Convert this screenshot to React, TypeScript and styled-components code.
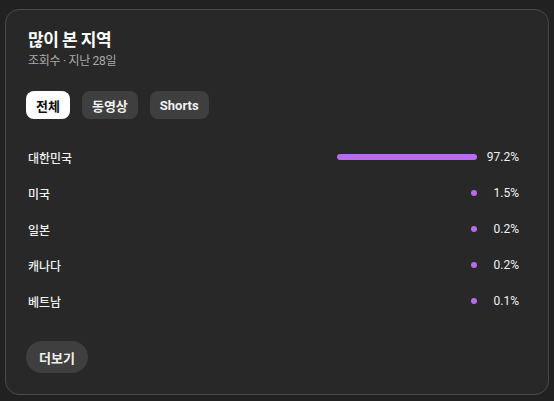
import styled, { createGlobalStyle } from 'styled-components';

const GlobalStyle = createGlobalStyle`
  html, body {
    margin: 0;
    background-color: #212121;
  }
  body {
    font-family: Roboto, "Noto Sans CJK KR", sans-serif;
    color: #f1f1f1;
  }
`;

const Page = styled.div`
  padding: 9px 5px 0 5px;
`;

const Card = styled.section`
  box-sizing: border-box;
  width: 544px;
  height: 386px;
  padding: 18px 20px 21px 20px;
  background-color: #282828;
  border: 1px solid #4a4a4a;
  border-radius: 14px;
  display: flex;
  flex-direction: column;
  align-items: flex-start;
`;

const Title = styled.h2`
  margin: 0 0 0 2px;
  font-size: 17px;
  line-height: 24px;
  font-weight: 700;
  color: #fff;
  letter-spacing: -0.5px;
`;

const Subtitle = styled.div`
  margin-left: 2px;
  font-size: 12px;
  line-height: 18px;
  color: #aaaaaa;
  letter-spacing: -0.3px;
`;

const ChipRow = styled.div`
  display: flex;
  gap: 12px;
  margin-top: 21px;
`;

const Chip = styled.button<{ $active?: boolean }>`
  height: 28px;
  padding: 0 10px;
  border: none;
  border-radius: 8px;
  font-family: Roboto, "Noto Sans CJK KR", sans-serif;
  font-size: 13px;
  font-weight: 700;
  background-color: ${(p) => (p.$active ? '#ffffff' : '#3f3f3f')};
  color: ${(p) => (p.$active ? '#0f0f0f' : '#f1f1f1')};
  cursor: pointer;
`;

const List = styled.ul`
  list-style: none;
  margin: 20px 0 0 0;
  padding: 0;
  align-self: stretch;
`;

const Row = styled.li`
  display: flex;
  align-items: center;
  height: 36px;
  padding: 0 9px 0 2px;
`;

const Label = styled.span`
  flex: 1;
  font-size: 12px;
  font-weight: 500;
  color: #f1f1f1;
`;

const Track = styled.div`
  width: 144px;
  height: 6px;
  display: flex;
  justify-content: flex-end;
`;

const Fill = styled.div`
  height: 6px;
  min-width: 6px;
  border-radius: 3px;
  background-color: #b96cea;
`;

const Percent = styled.span`
  width: 42px;
  text-align: right;
  font-size: 12px;
  color: #f1f1f1;
`;

const MoreButton = styled.button`
  margin-top: 22px;
  height: 32px;
  padding: 0 13px;
  border: none;
  border-radius: 16px;
  background-color: #3f3f3f;
  color: #f1f1f1;
  font-family: Roboto, "Noto Sans CJK KR", sans-serif;
  font-size: 13px;
  font-weight: 700;
  cursor: pointer;
`;

const regions = [
  { name: '대한민국', value: 97.2 },
  { name: '미국', value: 1.5 },
  { name: '일본', value: 0.2 },
  { name: '캐나다', value: 0.2 },
  { name: '베트남', value: 0.1 },
];

const tabs = ['전체', '동영상', 'Shorts'];

function App() {
  return (
    <>
      <GlobalStyle />
      <Page>
        <Card>
          <Title>많이 본 지역</Title>
          <Subtitle>조회수 · 지난 28일</Subtitle>
          <ChipRow>
            {tabs.map((tab, index) => (
              <Chip key={tab} $active={index === 0}>
                {tab}
              </Chip>
            ))}
          </ChipRow>
          <List>
            {regions.map((region) => (
              <Row key={region.name}>
                <Label>{region.name}</Label>
                <Track>
                  <Fill style={{ width: `${region.value}%` }} />
                </Track>
                <Percent>{region.value.toFixed(1)}%</Percent>
              </Row>
            ))}
          </List>
          <MoreButton>더보기</MoreButton>
        </Card>
      </Page>
    </>
  );
}

export default App;
